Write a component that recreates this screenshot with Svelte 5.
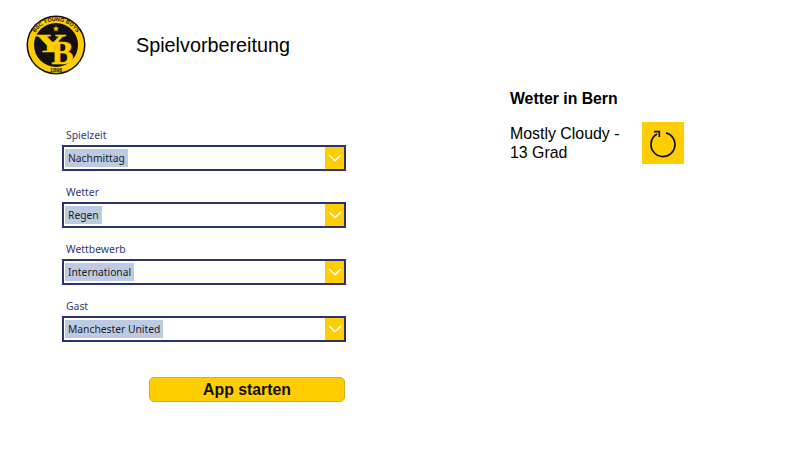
<script>
  const fields = [
    { label: 'Spielzeit', value: 'Nachmittag' },
    { label: 'Wetter', value: 'Regen' },
    { label: 'Wettbewerb', value: 'International' },
    { label: 'Gast', value: 'Manchester United' }
  ];
</script>

<div class="page">
  <div class="left">
    <header class="head">
      <svg class="logo" width="60" height="60" viewBox="0 0 60 60" aria-label="BSC Young Boys">
        <circle cx="30" cy="30" r="29.5" fill="#111" />
        <circle cx="30" cy="30" r="28" fill="#ffcd00" />
        <circle cx="30" cy="30" r="22" fill="#111" />
        <defs>
          <path id="arcTop" d="M6 30a24 24 0 0 1 48 0" />
        </defs>
        <text class="ring"><textPath href="#arcTop" startOffset="50%" text-anchor="middle">BSC YOUNG BOYS</textPath></text>
        <text class="ring" x="30" y="56.5" text-anchor="middle">1898</text>
        <path d="M30 10.5l.8 2.2 2.4.1-1.9 1.5.7 2.3-2-1.3-2 1.3.7-2.3-1.9-1.5 2.4-.1z" fill="#ffcd00" />
        <text class="mono y" transform="translate(24.5 37) scale(1.7 1)" text-anchor="middle">Y</text>
        <text class="mono b" x="36.5" y="48.5" text-anchor="middle">B</text>
      </svg>
      <h1>Spielvorbereitung</h1>
    </header>

    <form class="form">
      {#each fields as f}
        <div class="field">
          <span class="label">{f.label}</span>
          <div class="select">
            <span class="value"><span class="hl">{f.value}</span></span>
            <span class="arrow">
              <svg width="14" height="8" viewBox="0 0 14 8"><path d="M1 1l6 5.6L13 1" fill="none" stroke="#fff" stroke-width="1.5" /></svg>
            </span>
          </div>
        </div>
      {/each}
      <button type="button" class="start">App starten</button>
    </form>
  </div>

  <aside class="weather">
    <h2>Wetter in Bern</h2>
    <div class="row">
      <p>Mostly Cloudy -<br />13 Grad</p>
      <button type="button" class="refresh" aria-label="Aktualisieren">
        <svg width="42" height="42" viewBox="0 0 42 42">
          <path d="M24 10.9A12 12 0 1 1 15 12.1" fill="none" stroke="#111" stroke-width="1.7" />
          <path d="M12 9.7h5.3V15" fill="none" stroke="#111" stroke-width="1.7" />
        </svg>
      </button>
    </div>
  </aside>
</div>

<style>
  :global(body) { margin: 0; background: #fff; }
  .page {
    width: 806px;
    height: 458px;
    display: flex;
    overflow: hidden;
    font-family: "Liberation Sans", Arial, sans-serif;
    color: #000;
  }
  .left { width: 510px; flex: none; }
  .head { display: flex; align-items: flex-start; padding: 15px 0 0 26px; }
  .logo { flex: none; display: block; }
  h1 { margin: 19px 0 0 50px; font-size: 19.8px; line-height: 23px; font-weight: 400; }
  .ring { font-family: "Liberation Sans", sans-serif; font-size: 5.4px; font-weight: 700; fill: #111; }
  .mono { font-family: "Liberation Serif", serif; font-weight: 700; fill: #ffcd00; stroke: #ffcd00; stroke-width: 0.5px; }
  .y { font-size: 26px; }
  .b { font-size: 33px; }
  .form { display: flex; flex-direction: column; margin: 53px 0 0 62px; width: 284px; }
  .field { display: flex; flex-direction: column; height: 57px; }
  .label {
    font-family: "Noto Sans", sans-serif;
    font-size: 10.4px;
    line-height: 15px;
    color: #33376f;
    padding: 0 0 2px 4px;
  }
  .select {
    height: 26px;
    box-sizing: border-box;
    border: 2px solid #2d3370;
    display: flex;
    justify-content: space-between;
    background: #fff;
  }
  .value { padding: 2px 0 0 1px; }
  .hl {
    display: block;
    background: #bccbe2;
    height: 18px;
    padding: 0 3px 0 3px;
    font-family: "Noto Sans", sans-serif;
    font-size: 10.3px;
    line-height: 18px;
    color: #1c1c28;
  }
  .arrow {
    width: 19px;
    background: #ffcd00;
    display: flex;
    align-items: center;
    justify-content: center;
  }
  .start {
    margin: 21px 0 0 87px;
    width: 196px;
    height: 25px;
    box-sizing: border-box;
    background: #ffcd00;
    border: 1px solid #d8ae17;
    border-radius: 5px;
    font-family: "Liberation Sans", sans-serif;
    font-size: 15.8px;
    font-weight: 700;
    color: #111;
    padding: 0;
  }
  .weather { padding-top: 89px; }
  h2 { margin: 0; font-size: 15.8px; line-height: 19px; font-weight: 700; }
  .row { display: flex; align-items: flex-start; margin-top: 14px; }
  p { margin: 2px 0 0; width: 132px; font-size: 15.9px; line-height: 19px; }
  .refresh {
    width: 42px;
    height: 42px;
    border: 0;
    padding: 0;
    background: #ffcd00;
    display: flex;
    align-items: center;
    justify-content: center;
  }
</style>
